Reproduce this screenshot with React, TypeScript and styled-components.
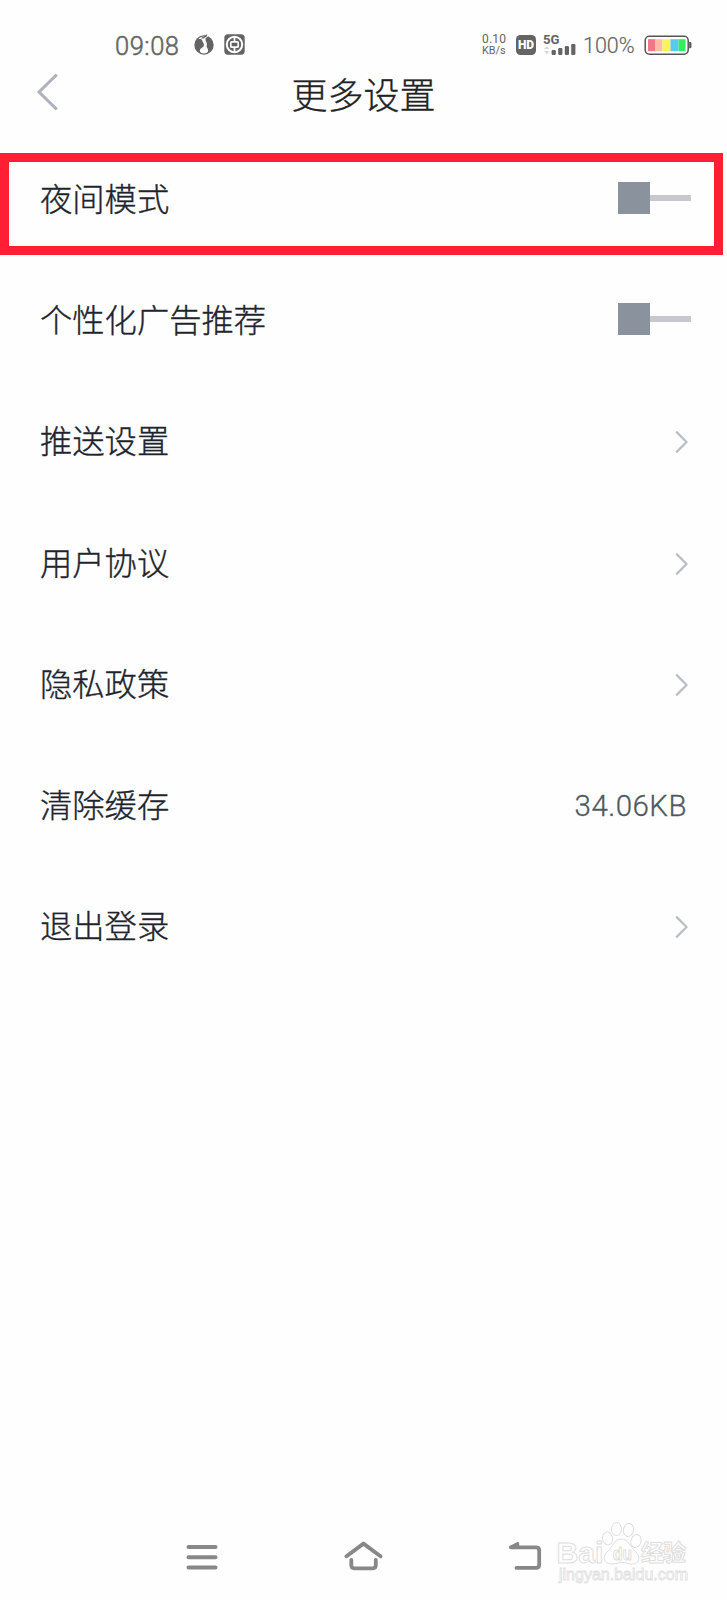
import React from "react";
import styled, { createGlobalStyle } from "styled-components";

const GlobalStyle = createGlobalStyle`
  * { box-sizing: border-box; }
  body {
    margin: 0;
    background: #fefefe;
    font-family: "Noto Sans CJK SC", sans-serif;
  }
`;

const Screen = styled.div`
  position: relative;
  width: 727px;
  height: 1600px;
  display: flex;
  flex-direction: column;
  overflow: hidden;
  background: #fefefe;
`;

const StatusBar = styled.header`
  height: 64px;
  padding: 25px 35px 0 115px;
  display: flex;
  align-items: center;
  justify-content: space-between;
  color: #646464;
  font-family: Roboto, sans-serif;
`;

const StatusGroup = styled.div`
  display: flex;
  align-items: center;
  height: 39px;
`;

const Clock = styled.span`
  font-size: 25.5px;
  line-height: 30px;
  width: 79px;
  padding-top: 2px;
  font-weight: 300;
  letter-spacing: 0.5px;
  -webkit-text-stroke: 0.5px #646464;
`;

const NetSpeed = styled.div`
  display: flex;
  flex-direction: column;
  width: 34px;
  font-size: 12px;
  line-height: 12px;
  padding-top: 1px;
`;

const SpeedValue = styled.span`
  height: 12px;
  letter-spacing: 0.2px;
`;

const SpeedUnit = styled.span`
  height: 12px;
  font-size: 10.8px;
`;

const BatteryText = styled.span`
  width: 61px;
  font-size: 21.5px;
  line-height: 24px;
  font-weight: 300;
  -webkit-text-stroke: 0.2px #646464;
  padding-top: 2px;
`;

const TitleBar = styled.div`
  height: 74px;
  padding: 0 36px;
  display: grid;
  grid-template-columns: 24px 1fr 24px;
  align-items: start;
`;

const BackButton = styled.button`
  border: 0;
  padding: 9px 0 0;
  background: none;
  display: flex;
`;

const Title = styled.h1`
  margin: 0;
  padding-top: 4px;
  text-align: center;
  font-size: 36px;
  line-height: 50px;
  font-weight: 300;
  -webkit-text-stroke: 0.35px #222;
  color: #222;
`;

const List = styled.ul`
  margin: 0;
  padding: 0;
  list-style: none;
  flex: 1;
`;

const Row = styled.li`
  height: 121.2px;
  padding: 0 36px 0 40px;
  display: flex;
  align-items: center;
  justify-content: space-between;
`;

const Label = styled.span`
  font-size: 32.3px;
  line-height: 48px;
  padding-bottom: 3px;
  font-weight: 300;
  -webkit-text-stroke: 0.35px #1d242c;
  color: #1d242c;
`;

const Value = styled.span`
  font-family: Roboto, sans-serif;
  font-size: 29.5px;
  line-height: 40px;
  font-weight: 300;
  letter-spacing: 0.45px;
  -webkit-text-stroke: 0.3px #4f5860;
  color: #4f5860;
  padding: 3px 4px 0 0;
`;

const Toggle = styled.div`
  display: flex;
  align-items: center;
  padding-bottom: 2px;
`;

const Knob = styled.span`
  width: 32px;
  height: 32px;
  background: #8a929d;
`;

const Track = styled.span`
  width: 41px;
  height: 6px;
  background: #c7c7cd;
`;

const ChevronSlot = styled.span`
  display: flex;
  padding: 3px 2.5px 0 0;
`;

const Highlight = styled.div`
  position: absolute;
  left: 0;
  top: 153px;
  width: 723px;
  height: 102px;
  border: 9px solid #ff1f35;
`;

const NavBar = styled.nav`
  height: 84px;
  padding: 0 185px 3px 185px;
  display: flex;
  align-items: center;
  justify-content: space-between;
`;

const Watermark = styled.div`
  position: absolute;
  left: 552px;
  top: 1518px;
`;

const BrandMark = () => (
  <svg width="20" height="21" viewBox="0 0 20 21">
    <circle cx="10" cy="11" r="9.7" fill="#646464" />
    <path d="M14.6 2.2C12.4 3 11.2 4.2 11.5 6C12 8.2 13.6 9.4 12.6 12.2C12.3 13.2 14.2 14.6 14.2 16.6C14.2 18.6 12.4 19.6 10 19.6C7.6 19.6 5.8 18.6 5.8 16.6C5.8 14.4 8.6 13.8 9.6 12.2C10.8 10 8.6 8.6 8.2 6.6C7.8 5 6 4.8 4.2 5.2C5.8 2.8 10 2.6 12.6 1.4Z" fill="#fefefe" />
    <path d="M6.8 4.4L13.3 0L12.8 2.3L9.6 4.6Z" fill="#646464" />
  </svg>
);

const BankMark = () => (
  <svg width="21" height="21" viewBox="0 0 21 21">
    <rect x=".3" y=".3" width="20.4" height="20.4" rx="3.6" fill="#646464" />
    <circle cx="10.5" cy="10.5" r="7.7" fill="none" stroke="#fefefe" strokeWidth="2" />
    <path d="M10.5 3V7.5M10.5 13.5V18" stroke="#fefefe" strokeWidth="1.8" />
    <rect x="6.8" y="7.8" width="7.4" height="5.4" rx="1" fill="none" stroke="#fefefe" strokeWidth="1.7" />
  </svg>
);

const HdMark = styled.span`
  width: 20px;
  height: 20px;
  margin-right: 7px;
  border-radius: 4.5px;
  background: #646464;
  color: #fefefe;
  display: flex;
  align-items: center;
  justify-content: center;
  font-size: 12px;
  line-height: 14px;
  font-weight: 900;
`;

const IconGap = styled.span`
  width: 10px;
`;

const Signal = () => (
  <svg width="40" height="24" viewBox="0 0 40 24">
    <text x="0" y="11" fontFamily="Roboto" fontWeight="700" fontSize="13" textLength="16.5" lengthAdjust="spacingAndGlyphs" fill="#646464">5G</text>
    <path d="M1 16L3.8 13L6.6 16ZM1 18L3.8 21.4L6.6 18Z" fill="#dadada" />
    <g fill="#646464">
      <rect x="8.6" y="17" width="4.2" height="5" rx="1.2" />
      <rect x="15.2" y="15" width="4.2" height="7" rx="1.2" />
      <rect x="21.8" y="13" width="4.2" height="9" rx="1.2" />
      <rect x="28.2" y="11" width="4.2" height="11" rx="1.2" />
    </g>
  </svg>
);

const Battery = () => (
  <svg width="48" height="22" viewBox="0 0 48 22">
    <rect x="1.2" y="2.2" width="43" height="18" rx="4.2" fill="#fff" stroke="#555" strokeWidth="1.5" />
    <path d="M45.2 8H46.2Q47.4 8 47.4 9.3V12.9Q47.4 14.2 46.2 14.2H45.2Z" fill="#555" />
    <rect x="4" y="5.2" width="7.5" height="12" fill="#f27785" />
    <rect x="11.5" y="5.2" width="7" height="12" fill="#ffbda8" />
    <rect x="18.5" y="5.2" width="8" height="12" fill="#f9f45e" />
    <rect x="26.5" y="5.2" width="8" height="12" fill="#5bc8f3" />
    <rect x="34.5" y="5.2" width="7" height="12" fill="#2ff05a" />
  </svg>
);

const Chevron = () => (
  <ChevronSlot>
    <svg width="14" height="24" viewBox="0 0 14 24">
      <path d="M1.2 1.6L11.6 12L1.2 22.4" fill="none" stroke="#b8bec5" strokeWidth="2.2" strokeLinejoin="round" />
    </svg>
  </ChevronSlot>
);

const Switch = () => (
  <Toggle>
    <Knob />
    <Track />
  </Toggle>
);

type Item = { label: string; kind: "switch" | "link" | "value"; value?: string };

const items: Item[] = [
  { label: "夜间模式", kind: "switch" },
  { label: "个性化广告推荐", kind: "switch" },
  { label: "推送设置", kind: "link" },
  { label: "用户协议", kind: "link" },
  { label: "隐私政策", kind: "link" },
  { label: "清除缓存", kind: "value", value: "34.06KB" },
  { label: "退出登录", kind: "link" },
];

export default function App() {
  return (
    <Screen>
      <GlobalStyle />
      <StatusBar>
        <StatusGroup>
          <Clock>09:08</Clock>
          <BrandMark />
          <IconGap />
          <BankMark />
        </StatusGroup>
        <StatusGroup>
          <NetSpeed>
            <SpeedValue>0.10</SpeedValue>
            <SpeedUnit>KB/s</SpeedUnit>
          </NetSpeed>
          <HdMark>HD</HdMark>
          <Signal />
          <BatteryText>100%</BatteryText>
          <Battery />
        </StatusGroup>
      </StatusBar>
      <TitleBar>
        <BackButton aria-label="返回">
          <svg width="24" height="38" viewBox="0 0 24 38">
            <path d="M20.8 1.6L3 19L20.8 36.4" fill="none" stroke="#adb2bd" strokeWidth="3" />
          </svg>
        </BackButton>
        <Title>更多设置</Title>
      </TitleBar>
      <List>
        {items.map((item) => (
          <Row key={item.label}>
            <Label>{item.label}</Label>
            {item.kind === "switch" && <Switch />}
            {item.kind === "link" && <Chevron />}
            {item.kind === "value" && <Value>{item.value}</Value>}
          </Row>
        ))}
      </List>
      <NavBar>
        <svg width="34" height="30" viewBox="0 0 34 30">
          <path d="M3.5 5.1H30.5M3.5 15.3H30.5M3.5 25.5H30.5" stroke="#888" strokeWidth="4" strokeLinecap="round" />
        </svg>
        <svg width="40" height="32" viewBox="0 0 40 32">
          <path d="M2.5 15.3L19.5 2.6L36.5 15.3" fill="none" stroke="#888" strokeWidth="3.9" strokeLinecap="round" strokeLinejoin="round" />
          <path d="M7.3 18.8V24.3Q7.3 27.3 10.3 27.3H28.8Q31.8 27.3 31.8 24.3V18.8" fill="none" stroke="#888" strokeWidth="3.8" strokeLinecap="round" />
        </svg>
        <svg width="34" height="30" viewBox="0 0 34 30">
          <path d="M3 5.4H28Q31.2 5.4 31.2 8.6V22.7Q31.2 25.9 28 25.9H8.5" fill="none" stroke="#888" strokeWidth="3.8" strokeLinecap="round" />
          <path d="M1.2 4.2L9.2 .1Q11 -.2 11.2 1.5V6.2L2 7Z" fill="#888" />
        </svg>
      </NavBar>
      <Highlight />
      <Watermark>
        <svg width="140" height="70" viewBox="0 0 140 70">
          <g fill="#fefefe" stroke="#dfdfdf" strokeWidth="1">
            <text x="4.5" y="45" fontFamily="Liberation Sans" fontWeight="700" fontSize="30" textLength="47" lengthAdjust="spacingAndGlyphs">Bai</text>
            <ellipse cx="55.5" cy="20.5" rx="5" ry="6.5" transform="rotate(-12 55.5 20.5)" />
            <ellipse cx="64.5" cy="11" rx="5" ry="6.5" />
            <ellipse cx="76.5" cy="12" rx="5" ry="6.5" transform="rotate(10 76.5 12)" />
            <ellipse cx="84" cy="23" rx="5" ry="6.5" transform="rotate(18 84 23)" />
            <path d="M69 21C62 21 61 29 56 33C50 38 51 46 60 46C65 46 65 44.5 70 44.5C75 44.5 76 46 80 46C88 46 89 38 83 33C78 29 77 21 69 21Z" />
            <text x="61" y="42" fontFamily="Liberation Sans" fontWeight="700" fontSize="18" textLength="19" lengthAdjust="spacingAndGlyphs">du</text>
            <text x="89" y="43" fontFamily="Noto Sans CJK SC" fontWeight="700" fontSize="23" textLength="45">经验</text>
          </g>
          <text x="7" y="62" fontFamily="Liberation Sans" fontSize="16" textLength="129" fill="#fefefe" stroke="#e0e0e0" strokeWidth=".8">jingyan.baidu.com</text>
        </svg>
      </Watermark>
    </Screen>
  );
}
